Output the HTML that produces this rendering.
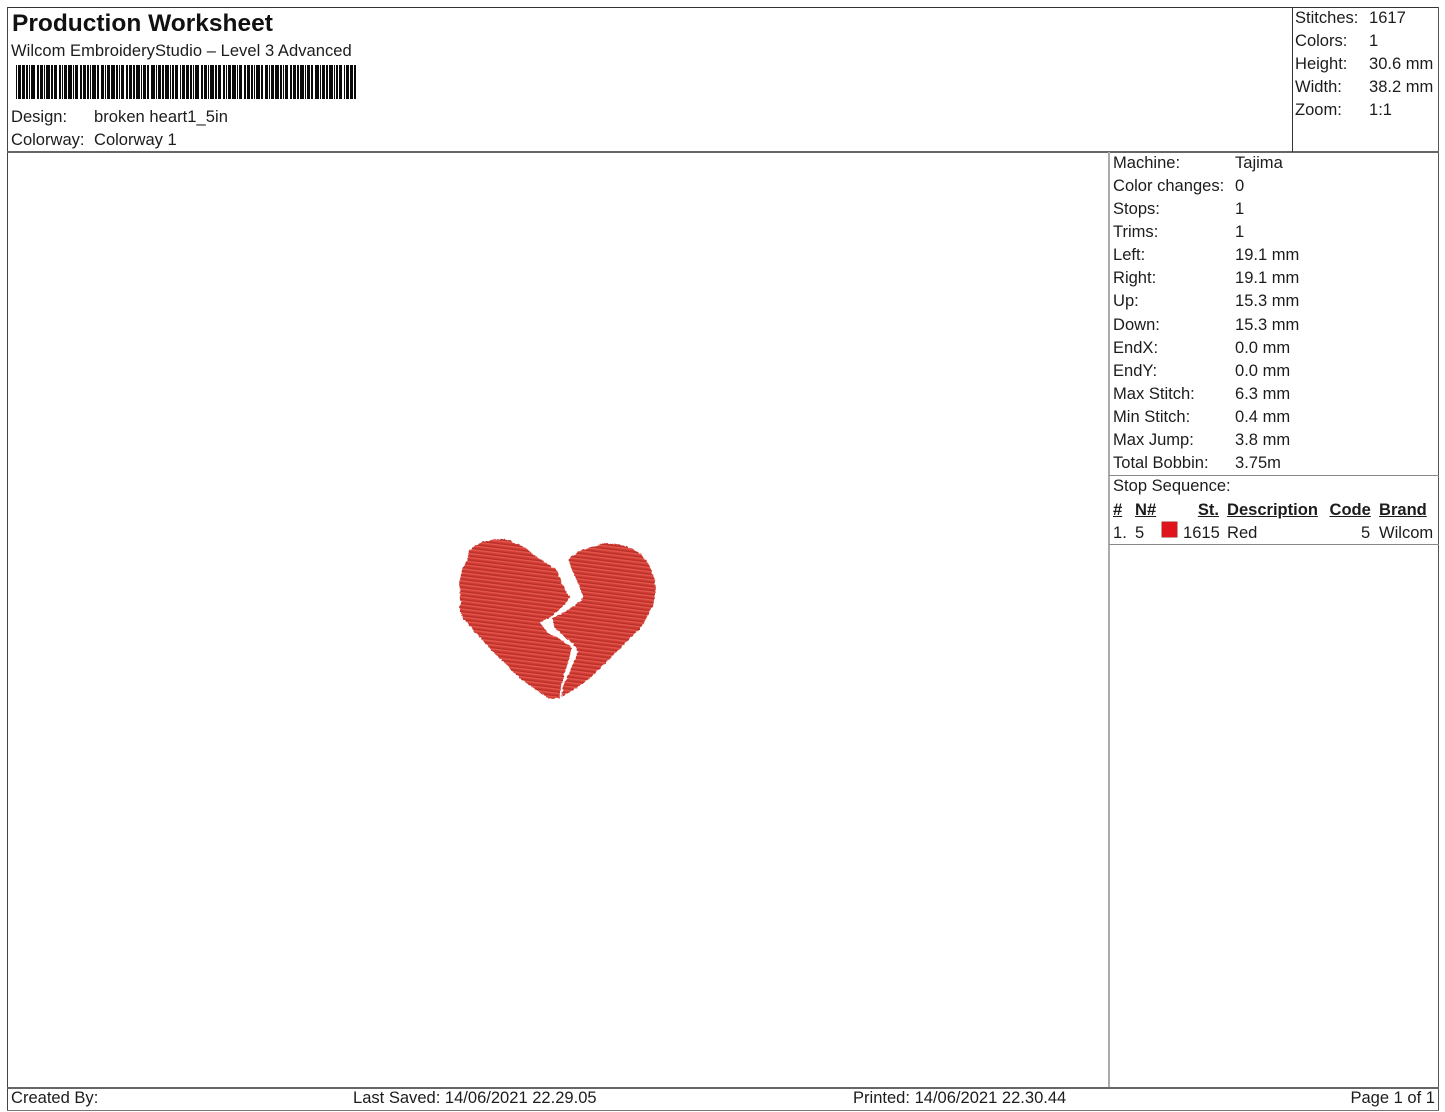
<!DOCTYPE html>
<html lang="en">
<head>
<meta charset="utf-8">
<title>Production Worksheet</title>
<style>
html,body{margin:0;padding:0;background:#fff}
body{width:1445px;height:1112px;position:relative;overflow:hidden;font-family:"Liberation Sans",Arial,sans-serif;font-size:16.55px;line-height:23px;color:#1c1c1c;filter:blur(.3px)}
.t{position:absolute;white-space:nowrap}
.r{position:absolute;white-space:nowrap;text-align:right}
.b{font-weight:700;text-decoration:underline}
.l{position:absolute;background:#555}
</style>
</head>
<body>
<!-- frame lines -->
<div class="l" style="left:7px;top:7px;width:1432px;height:1px;background:#333"></div>
<div class="l" style="left:7px;top:7px;width:1px;height:1104px;background:#444"></div>
<div class="l" style="left:1438px;top:7px;width:1px;height:1104px;background:#555"></div>
<div class="l" style="left:7px;top:151px;width:1432px;height:2px;background:#666"></div>
<div class="l" style="left:7px;top:1087px;width:1432px;height:2px;background:#666"></div>
<div class="l" style="left:7px;top:1110px;width:1432px;height:1px;background:#777"></div>
<div class="l" style="left:1292px;top:7px;width:1px;height:145px;background:#333"></div>
<div class="l" style="left:1108px;top:152px;width:2px;height:935px;background:#aaa"></div>
<div class="l" style="left:1109px;top:475px;width:330px;height:1px;background:#888"></div>
<div class="l" style="left:1109px;top:544px;width:330px;height:1px;background:#888"></div>

<!-- header -->
<div class="t" style="left:12px;top:9px;font-size:24.5px;line-height:30px;font-weight:700;color:#111">Production Worksheet</div>
<div class="t" style="left:11px;top:39px;letter-spacing:.04px">Wilcom EmbroideryStudio – Level 3 Advanced</div>
<svg style="position:absolute;left:0;top:0" width="400" height="110" viewBox="0 0 400 110" shape-rendering="crispEdges">
<line x1="16" y1="82" x2="356" y2="82" stroke="#0a0a0a" stroke-width="34" stroke-dasharray="1 1 3 1 3 1 2 1 1 1 4 2 2 1 3 1 1 1 4 1 2 1 3 2 2 1 1 1 3 1 4 1 1 1 3 2 2 1 3 1 2 1 1 1 4 1 2 2 3 1 1 1 3 1 4 1 2 1 1 1 3 2 2 1 3 1 2 1 4 1 1 1 3 1 2 2 4 1 1 1 3 1 2 1 4 1 1 1 2 1 3 2"/>
</svg>
<div class="t" style="left:11px;top:105px">Design:</div>
<div class="t" style="left:94px;top:105px;letter-spacing:.04px">broken heart1_5in</div>
<div class="t" style="left:11px;top:128px">Colorway:</div>
<div class="t" style="left:94px;top:128px">Colorway 1</div>

<!-- top-right stats -->
<div class="t" style="left:1295px;top:6px">Stitches:</div><div class="t" style="left:1369px;top:6px">1617</div>
<div class="t" style="left:1295px;top:29px">Colors:</div><div class="t" style="left:1369px;top:29px">1</div>
<div class="t" style="left:1295px;top:52px">Height:</div><div class="t" style="left:1369px;top:52px">30.6 mm</div>
<div class="t" style="left:1295px;top:75px">Width:</div><div class="t" style="left:1369px;top:75px">38.2 mm</div>
<div class="t" style="left:1295px;top:98px">Zoom:</div><div class="t" style="left:1369px;top:98px">1:1</div>

<!-- right panel -->
<div class="t" style="left:1113px;top:151px">Machine:</div><div class="t" style="left:1235px;top:151px">Tajima</div>
<div class="t" style="left:1113px;top:174px">Color changes:</div><div class="t" style="left:1235px;top:174px">0</div>
<div class="t" style="left:1113px;top:197px">Stops:</div><div class="t" style="left:1235px;top:197px">1</div>
<div class="t" style="left:1113px;top:220px">Trims:</div><div class="t" style="left:1235px;top:220px">1</div>
<div class="t" style="left:1113px;top:243px">Left:</div><div class="t" style="left:1235px;top:243px">19.1 mm</div>
<div class="t" style="left:1113px;top:266px">Right:</div><div class="t" style="left:1235px;top:266px">19.1 mm</div>
<div class="t" style="left:1113px;top:289px">Up:</div><div class="t" style="left:1235px;top:289px">15.3 mm</div>
<div class="t" style="left:1113px;top:313px">Down:</div><div class="t" style="left:1235px;top:313px">15.3 mm</div>
<div class="t" style="left:1113px;top:336px">EndX:</div><div class="t" style="left:1235px;top:336px">0.0 mm</div>
<div class="t" style="left:1113px;top:359px">EndY:</div><div class="t" style="left:1235px;top:359px">0.0 mm</div>
<div class="t" style="left:1113px;top:382px">Max Stitch:</div><div class="t" style="left:1235px;top:382px">6.3 mm</div>
<div class="t" style="left:1113px;top:405px">Min Stitch:</div><div class="t" style="left:1235px;top:405px">0.4 mm</div>
<div class="t" style="left:1113px;top:428px">Max Jump:</div><div class="t" style="left:1235px;top:428px">3.8 mm</div>
<div class="t" style="left:1113px;top:451px">Total Bobbin:</div><div class="t" style="left:1235px;top:451px">3.75m</div>
<div class="t" style="left:1113px;top:474px">Stop Sequence:</div>

<div class="t b" style="left:1113px;top:498px">#</div>
<div class="t b" style="left:1135px;top:498px">N#</div>
<div class="r b" style="right:226px;top:498px">St.</div>
<div class="t b" style="left:1227px;top:498px">Description</div>
<div class="t b" style="left:1329.5px;top:498px">Code</div>
<div class="t b" style="left:1379px;top:498px">Brand</div>

<div class="t" style="left:1113px;top:521px">1.</div>
<div class="t" style="left:1135px;top:521px">5</div>
<div style="position:absolute;left:1162px;top:522px;width:15px;height:15px;background:#e0141c;box-shadow:0 0 0 .5px #8a3a3a"></div>
<div class="t" style="left:1183px;top:521px">1615</div>
<div class="t" style="left:1227px;top:521px">Red</div>
<div class="t" style="left:1361px;top:521px">5</div>
<div class="t" style="left:1379px;top:521px">Wilcom</div>

<!-- heart -->
<svg style="position:absolute;left:440px;top:525px" width="230" height="185" viewBox="0 0 690 555">
<defs>
<pattern id="st" width="60" height="12" patternUnits="userSpaceOnUse" patternTransform="rotate(7)">
<rect width="60" height="12" fill="#d23b33"/>
<rect y="0" width="60" height="4" fill="#e4564c"/>
<rect y="8" width="60" height="4" fill="#b9312a"/>
</pattern>
<filter id="rough" x="-5%" y="-5%" width="110%" height="110%">
<feTurbulence type="fractalNoise" baseFrequency="0.12" numOctaves="2" seed="4" result="n"/>
<feDisplacementMap in="SourceGraphic" in2="n" scale="9" xChannelSelector="R" yChannelSelector="G"/>
</filter>
<mask id="hm" maskUnits="userSpaceOnUse" x="0" y="0" width="690" height="555">
<g filter="url(#rough)" fill="#fff">
<path d="M85 80L105 62L130 50L160 43L190 42L222 52L250 65L285 92L310 108L350 135L365 175L390 218L365 248L340 270L325 280L300 291L312 310L325 325L360 342L395 368L385 410L372 450L362 490L360 520L325 520L285 492L240 460L195 415L150 370L108 325L70 280L58 252L62 240L58 170L65 140L70 125L82 105Z"/>
<path d="M385 102L412 82L440 70L490 55L530 57L560 65L590 78L610 95L628 120L640 150L648 190L640 240L622 275L600 310L560 350L520 390L490 420L460 450L430 475L400 495L365 515L370 480L392 435L415 380L402 358L385 345L345 310L335 280L380 258L430 220L420 190L405 155L392 125Z"/>
</g>
</mask>
</defs>
<rect width="690" height="555" fill="url(#st)" mask="url(#hm)"/>
</svg>

<!-- footer -->
<div class="t" style="left:11px;top:1086px">Created By:</div>
<div class="t" style="left:353px;top:1086px">Last Saved: 14/06/2021 22.29.05</div>
<div class="t" style="left:853px;top:1086px">Printed: 14/06/2021 22.30.44</div>
<div class="r" style="right:10px;top:1086px">Page 1 of 1</div>
</body>
</html>
